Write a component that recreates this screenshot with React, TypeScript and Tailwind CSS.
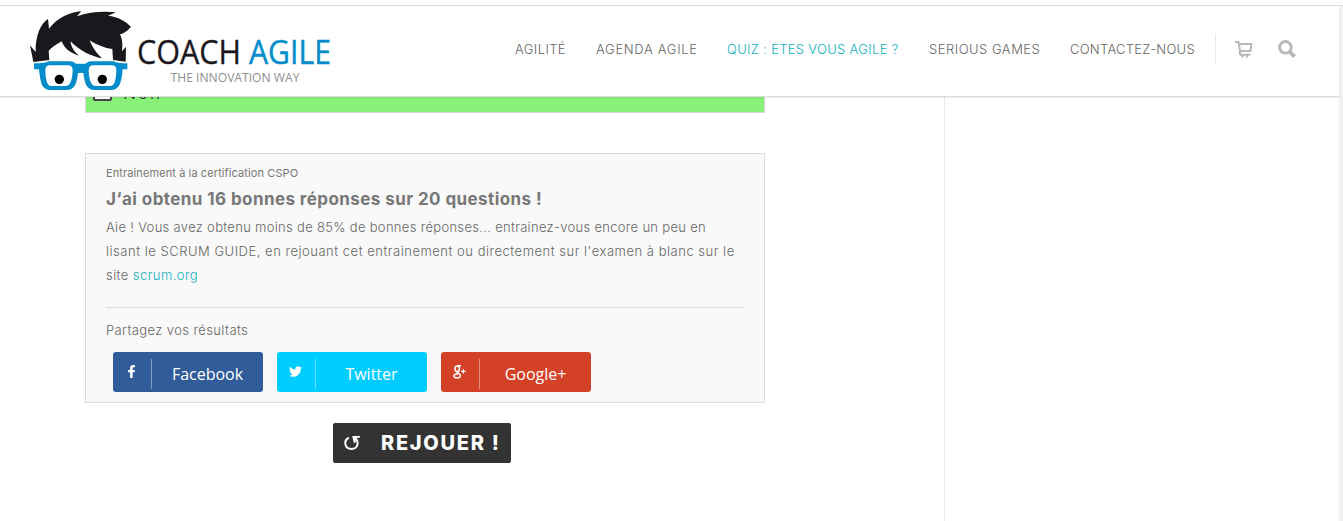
import React from "react";
import { FaFacebookF, FaTwitter } from "react-icons/fa";

function Wordmark() {
  return (
    <svg className="block h-[60px] w-[205px]" viewBox="0 0 205 60">
      <g fontFamily="'Open Sans', sans-serif">
        <text x="6" y="34" fontSize="32" fill="#1a181c" stroke="#1a181c" strokeWidth="0.3" textLength="104" lengthAdjust="spacingAndGlyphs">COACH</text>
        <text x="118" y="34" fontSize="32" fill="#048dca" stroke="#048dca" strokeWidth="0.4" textLength="82" lengthAdjust="spacingAndGlyphs">AGILE</text>
        <text x="39.5" y="51.5" fontSize="13.5" fill="#8f8f8f" textLength="129" lengthAdjust="spacingAndGlyphs">THE INNOVATION WAY</text>
      </g>
    </svg>
  );
}

function Face() {
  return (
    <svg className="block h-[84px] w-[110px]" viewBox="18 24 330 252">
      <path
        fill="#1a181c"
        d="M40 186 30 136 47 156C45 110 62 70 84 57L87 86C110 55 150 36 184 34L171 49C205 36 250 33 288 37L264 47C295 50 318 65 333 80C325 90 312 100 300 103C308 118 308 135 306 154L318 140 317 185 279 180 277 147C255 145 230 135 209 121C218 145 232 162 246 175C215 170 175 150 152 124C152 140 163 155 177 167C155 160 135 150 125 124C110 132 95 143 86 152L88 180Z"
      />
      <path
        fill="#048dca"
        fillRule="evenodd"
        d="M42 190Q80 190 84 184H150Q160 184 168 191H196Q204 184 214 184H282Q290 190 322 190V208H308Q306 240 298 256Q290 270 272 270H224Q206 270 199 256Q193 245 190 219H174Q171 245 165 256Q158 270 140 270H92Q74 270 66 256Q60 240 57 208H42ZM90 196Q76 196 76 212Q77 258 94 258H136Q156 258 158 212Q158 196 144 196ZM220 196Q206 196 206 212Q208 258 228 258H270Q288 258 289 212Q289 196 276 196Z"
      />
      <circle cx="118" cy="238" r="14" />
      <circle cx="247" cy="238" r="14" />
    </svg>
  );
}

const nav = [
  { label: "AGILITÉ", look: "w-[51px] tracking-[0.4px]" },
  { label: "AGENDA AGILE", look: "w-[101px] tracking-[0.68px]" },
  { label: "QUIZ : ETES VOUS AGILE ?", look: "w-[172px] tracking-[0.32px] text-[#12b0bd]" },
  { label: "SERIOUS GAMES", look: "w-[111px] tracking-[0.51px]" },
  { label: "CONTACTEZ-NOUS", look: "w-[126px] tracking-[0.27px]" },
];

function Header() {
  return (
    <header className="relative z-10 flex h-[91px] w-[1339px] shrink-0 border-b border-[#dcdcdc] bg-white shadow-[0_1px_2px_rgba(0,0,0,0.08)]">
      <div className="flex h-full w-[515px] items-start pl-[26px] pt-[2px]">
        <Face />
        <div className="-ml-[5px] pt-[22px]"><Wordmark /></div>
      </div>
      <nav className="flex h-full gap-[30px] pt-[33px] text-[13px] leading-5 font-light text-[#666]">
        {nav.map((n) => (
          <a key={n.label} className={"shrink-0 whitespace-nowrap " + n.look}>{n.label}</a>
        ))}
      </nav>
      <div className="mt-[28px] ml-[19px] flex h-[30px] items-center border-l border-[#e8e8e8] pl-[19px]">
        <svg className="size-[18px]" viewBox="0 0 18 18" fill="none" stroke="#b9b9b9" strokeWidth="2">
          <path d="M0 2H3.5L5 11H15.6L16.3 4H4M5 14.8H15.5M7.5 14.5V17.5M11.8 14.5V17.5M5 11V15" />
        </svg>
        <svg className="ml-[25px] size-[18px]" viewBox="0 0 18 18" fill="none" stroke="#b9b9b9" strokeWidth="3">
          <circle cx="7.4" cy="7.4" r="5.8" />
          <path strokeWidth="4" d="M11.8 11.8 16.6 16.6" />
        </svg>
      </div>
    </header>
  );
}

function GooglePlus() {
  return (
    <svg className="h-[14px] w-[13px]" viewBox="0 0 13 14" fill="none" stroke="white">
      <ellipse cx="4.2" cy="3.8" rx="2.2" ry="2.8" strokeWidth="1.6" />
      <path strokeWidth="1.4" d="M4.5.8H8M5 6.4 4.2 7.6Q7.6 9 7.4 10.8 7 13 4 13 .8 12.8.9 10.8 1.2 8.9 5 9" />
      <path strokeWidth="1.3" d="M8.2 6.4H12.6M10.4 4.2V8.6" />
    </svg>
  );
}

const shares = [
  { name: "Facebook", color: "bg-[#305c99]", icon: <FaFacebookF className="size-[13px]" /> },
  { name: "Twitter", color: "bg-[#00cdff]", icon: <FaTwitter className="size-[13px]" /> },
  { name: "Google+", color: "bg-[#d34127]", icon: <GooglePlus /> },
];

function ShareButton({ name, color, icon }: (typeof shares)[number]) {
  return (
    <button className={"flex h-10 w-[150px] items-center rounded-[3px] text-white " + color}>
      <span className="mt-[4px] flex h-[30px] w-[39px] justify-center border-r border-white/40 pt-[6px] pr-px">{icon}</span>
      <span className="flex-1 pt-[3px] text-center font-['Open_Sans',sans-serif] text-base leading-5">{name}</span>
    </button>
  );
}

export default function App() {
  return (
    <div className="flex h-[521px] w-[1343px] flex-col overflow-hidden bg-white font-['Inter',sans-serif] text-[#777]">
      <div className="h-[6px] shrink-0 border-b border-[#dcdcdc]" />
      <div className="flex flex-1 bg-[#f1f1f1]">
        <div className="flex h-[515px] w-[1339px] flex-col bg-white">
          <Header />
          <div className="flex flex-1">
            <main className="w-[945px] border-r border-[#ececec] pl-[85px]">
              <div className="-mt-[15px] flex h-[31px] w-[680px] items-start border border-[#d4d4d4] bg-[#89f07a]">
                <span className="mt-[1px] ml-[7px] h-[17px] w-[19px] rounded-[2px] border-2 border-[#444] bg-white" />
                <span className="ml-[11px] text-[17px] leading-5 font-light tracking-[2px] text-[#333]">Non</span>
              </div>
              <section className="mt-10 h-[250px] w-[680px] border border-[#dcdcdc] bg-[#f9f9f9] px-5">
                <p className="pt-[9px] text-[11px] leading-5 tracking-[0.1px]">Entrainement à la certification CSPO</p>
                <h1 className="mt-[4px] text-[17px] leading-6 font-bold tracking-[0.42px]">J‘ai obtenu 16 bonnes réponses sur 20 questions !</h1>
                <div className="mt-[4px] text-[13px] leading-6 font-light whitespace-nowrap text-[#666]">
                  <p className="tracking-[0.312px]">Aie ! Vous avez obtenu moins de 85% de bonnes réponses... entrainez-vous encore un peu en</p>
                  <p className="tracking-[0.515px]">lisant le SCRUM GUIDE, en rejouant cet entrainement ou directement sur l'examen à blanc sur le</p>
                  <p className="tracking-[0.43px]">site <a className="text-[#12b0bd]">scrum.org</a></p>
                </div>
                <hr className="mt-[20px] border-[#dcdcdc]" />
                <p className="mt-[12px] text-[13px] leading-5 font-light tracking-[0.4px] text-[#666]">Partagez vos résultats</p>
                <div className="mt-[12px] ml-[7px] flex gap-[14px]">
                  {shares.map((s) => <ShareButton key={s.name} {...s} />)}
                </div>
              </section>
              <button className="mt-5 ml-[248px] flex h-10 w-[178px] items-center rounded-[2px] bg-[#333] pl-[11px] text-white">
                <svg className="size-[16px]" viewBox="0 0 16 16" fill="none" stroke="white" strokeWidth="2">
                  <path d="M4.8 2.6C-.8 5.5 .5 14 7.5 14 14.5 14 15 6 11.2 3" />
                  <path fill="white" stroke="none" d="M8.2 1H16V2.4L12.5 3 11.5 7.8 9.8 8Z" />
                </svg>
                <span className="ml-[21px] text-xl leading-6 font-extrabold tracking-[1.7px] whitespace-nowrap">REJOUER !</span>
              </button>
            </main>
          </div>
        </div>
      </div>
    </div>
  );
}
